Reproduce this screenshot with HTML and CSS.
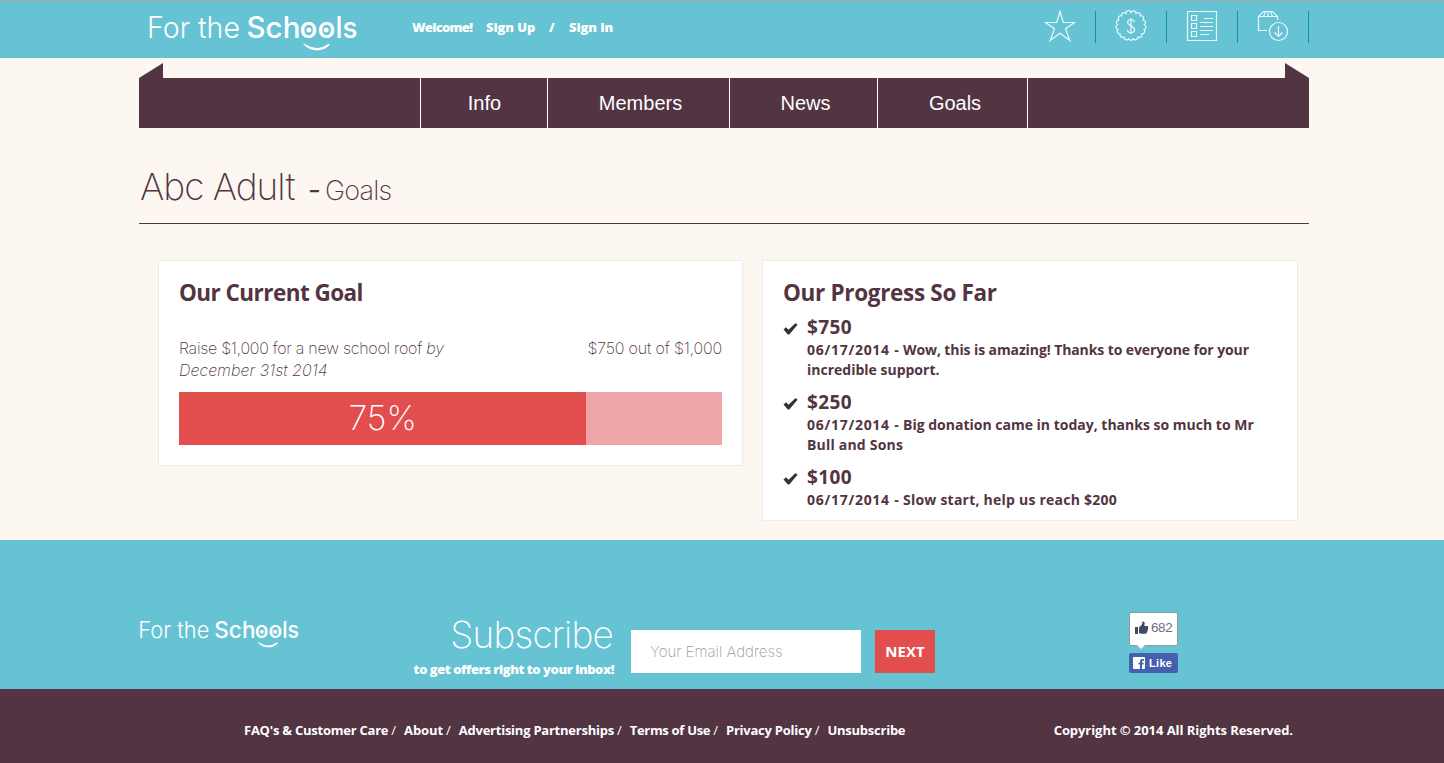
FILE: index.html
```html
<!DOCTYPE html>
<html lang="en">
<head>
<meta charset="utf-8">
<title>For the Schools - Goals</title>
<link rel="stylesheet" href="styles.css">
</head>
<body>
<header class="top">
  <div class="wrap top-row">
    <svg class="logo" viewBox="0 0 212 40">
      <text class="thin" x="-1" y="27" textLength="93" lengthAdjust="spacingAndGlyphs">For the</text>
      <text x="98.500" y="27" textLength="54" lengthAdjust="spacingAndGlyphs">Sch</text>
      <text x="151.500" y="27" textLength="36" lengthAdjust="spacingAndGlyphs">oo</text>
      <text x="187.500" y="27" textLength="22" lengthAdjust="spacingAndGlyphs">ls</text>
      <circle cx="160.800" cy="19" r="2.500"/><circle cx="178.200" cy="19" r="2.500"/>
      <path d="M156 32.500Q169 41 180 33Q182 32 181.300 34.300C175 41 163 41.500 155.700 33.500Q155 32.100 156 32.500z"/>
    </svg>
    <div class="account"><span class="welcome">Welcome!</span><a class="signup">Sign Up</a><span class="slash">/</span><a class="signin">Sign In</a></div>
    <div class="tools">
      <a class="tool"><svg viewBox="0 0 32 32"><path d="M16 1.500L19.300 12.500H30.500L21.500 18.700L25.800 30.500L16 23.300L6.200 30.500L10.500 18.700L1.500 12.500H12.700z"/></svg></a>
      <a class="tool"><svg viewBox="0 0 32 32"><path d="M16 2.500a2.600 2.600 0 0 1 5 .9a2.600 2.600 0 0 1 4.300 2.500a2.600 2.600 0 0 1 2.800 4.100a2.600 2.600 0 0 1 1.300 4.700a2.600 2.600 0 0 1-.4 4.900a2.600 2.600 0 0 1-2.300 4.300a2.600 2.600 0 0 1-3.700 3.200a2.600 2.600 0 0 1-4.700 1.700a2.600 2.600 0 0 1-4.700 0a2.600 2.600 0 0 1-4.700-1.700a2.600 2.600 0 0 1-3.700-3.200a2.600 2.600 0 0 1-2.300-4.300a2.600 2.600 0 0 1-.4-4.900a2.600 2.600 0 0 1 1.300-4.700a2.600 2.600 0 0 1 2.800-4.100a2.600 2.600 0 0 1 4.300-2.500a2.600 2.600 0 0 1 5.100-.9z"/><path d="M16 8v16M19.300 12.500c0-4-6.600-4-6.600 0c0 3.800 6.800 3 6.800 7c0 4.200-7 4.200-7 0"/></svg></a>
      <a class="tool"><svg viewBox="0 0 32 32"><path d="M1.500 1.500h29v29h-29zM5.500 5.500h5v5h-5zM5.500 13.500h5v5h-5zM5.500 21.500h5v5h-5zM18 8.500h9M14 12.500h13M14 16.500h13M14 20.500h13M14 24.500h9"/></svg></a>
      <a class="tool"><svg viewBox="0 0 32 32"><path d="M10 20.500H1.500V6.500L6.500 1.500H15.500L20.500 6.500V10M1.500 6.500H20.500M6.500 6.500L8.500 1.500M11 1.500V6.500M15.500 6.500L13.500 1.500M21.500 16v10M17.500 22.500L21.500 26.500L25.500 22.500"/><circle cx="21.500" cy="21.500" r="9"/></svg></a>
    </div>
  </div>
</header>

<main class="wrap">
  <div class="ribbon-ends"><i class="end-left"></i><i class="end-right"></i></div>
  <nav class="nav"><a class="n1">Info</a><a class="n2">Members</a><a class="n3">News</a><a class="n4">Goals</a></nav>
  <h1 class="title"><span class="group">Abc Adult</span><span class="dash">-</span><span class="page">Goals</span></h1>
  <div class="cards">
    <section class="card goal">
      <h2 class="h-goal">Our Current Goal</h2>
      <div class="goal-text">
        <p><span class="what">Raise $1,000 for a new school roof <em>by</em></span><br><em>December 31st 2014</em></p>
        <p class="amount">$750 out of $1,000</p>
      </div>
      <div class="bar"><div class="fill" style="width:75%">75%</div></div>
    </section>
    <section class="card progress">
      <h2 class="h-progress">Our Progress So Far</h2>
      <ul class="list">
        <li><svg class="tick" viewBox="0 0 15 12"><path d="M0.500 6.500L3 4.200L5.600 6.700L12 0.500Q13.800 0 14.500 1.800L6.300 11.500H4.800z"/></svg><div><h3>$750</h3><p><span class="date">06/17/2014 - </span><span class="l1">Wow, this is amazing! Thanks to everyone for your</span><br>incredible support.</p></div></li>
        <li><svg class="tick" viewBox="0 0 15 12"><path d="M0.500 6.500L3 4.200L5.600 6.700L12 0.500Q13.800 0 14.500 1.800L6.300 11.500H4.800z"/></svg><div><h3>$250</h3><p><span class="date">06/17/2014 - </span>Big donation came in today, thanks so much to Mr<br><span class="l4">Bull and Sons</span></p></div></li>
        <li><svg class="tick" viewBox="0 0 15 12"><path d="M0.500 6.500L3 4.200L5.600 6.700L12 0.500Q13.800 0 14.500 1.800L6.300 11.500H4.800z"/></svg><div><h3>$100</h3><p><span class="date">06/17/2014 - </span><span class="l5">Slow start, help us reach $200</span></p></div></li>
      </ul>
    </section>
  </div>
</main>

<section class="subscribe">
  <div class="wrap sub-row">
    <svg class="logo logo-small" viewBox="0 0 212 40">
      <text class="thin" x="-1" y="27" textLength="93" lengthAdjust="spacingAndGlyphs">For the</text>
      <text x="98.500" y="27" textLength="54" lengthAdjust="spacingAndGlyphs">Sch</text>
      <text x="151.500" y="27" textLength="36" lengthAdjust="spacingAndGlyphs">oo</text>
      <text x="187.500" y="27" textLength="22" lengthAdjust="spacingAndGlyphs">ls</text>
      <circle cx="160.800" cy="19" r="2.500"/><circle cx="178.200" cy="19" r="2.500"/>
      <path d="M156 32.500Q169 41 180 33Q182 32 181.300 34.300C175 41 163 41.500 155.700 33.500Q155 32.100 156 32.500z"/>
    </svg>
    <div class="sub-text"><div class="sub-title">Subscribe</div><div class="sub-note">to get offers right to your inbox!</div></div>
    <div class="email">Your Email Address</div>
    <div class="next">NEXT</div>
    <div class="like">
      <div class="count"><svg viewBox="0 0 14 14"><path d="M0 6h3v7H0zM4 6.500L7 3.500L7.500 0.500Q9.500 0 9.700 2.500L9.300 5H12.500Q13.600 5.500 13 7Q13.300 8 12.700 9Q12.700 10.200 12 11Q12 12.500 10.500 12.700H6L4 12z"/></svg><span>682</span></div>
      <div class="like-btn"><svg viewBox="0 0 12 12"><path d="M1 0H11a1 1 0 0 1 1 1V11a1 1 0 0 1-1 1H9V7.500H10.500L10.800 5.700H9V4.500Q9 3.700 10 3.700H11V2H9.500Q7 2 7 4.300V5.700H5.500V7.500H7V12H1a1 1 0 0 1-1-1V1a1 1 0 0 1 1-1z"/></svg><span>Like</span></div>
    </div>
  </div>
</section>

<footer class="foot">
  <div class="wrap foot-row">
    <a>FAQ's &amp; Customer Care</a><i>/</i><a class="about">About</a><i>/</i><a>Advertising Partnerships</a><i>/</i><a class="terms">Terms of Use</a><i>/</i><a>Privacy Policy</a><i>/</i><a>Unsubscribe</a>
    <span class="copy">Copyright © 2014 All Rights Reserved.</span>
  </div>
</footer>
</body>
</html>
```
FILE: styles.css
```css
* { box-sizing: border-box; }
body { margin: 0; background: #fdf7f1; color: #523442; font-family: "Open Sans", "Noto Sans", sans-serif; white-space: nowrap; }
h1, h2, h3, p, ul { margin: 0; padding: 0; }
.wrap { width: 1170px; margin-left: 139px; }

.top { height: 58px; background: #66c3d4; border-top: 2px solid #85b5bd; }
.top-row { display: flex; color: #fff; }
.logo { width: 212px; height: 40px; margin: 9px 0 0 9px; overflow: visible; fill: #fff; font: 500 29.500px Inter, "Liberation Sans", sans-serif; }
.logo .thin { font-weight: 300; }
.account { display: flex; margin: 15px 0 0 52px; font-weight: 800; font-size: 13px; line-height: 20px; }
.welcome { width: 74px; letter-spacing: -0.7px; }
.signup { width: 63px; letter-spacing: -0.1px; }
.slash { width: 20px; }
.signin { letter-spacing: -0.1px; }
.tools { display: flex; margin: 9px 0 0 auto; }
.tool { display: flex; justify-content: center; width: 71px; height: 32px; border-right: 1px solid #1692a3; }
.tool svg { width: 32px; height: 32px; margin-top: -1px; fill: none; stroke: #e6fbff; stroke-width: 1.2; }

.ribbon-ends { display: flex; justify-content: space-between; padding-top: 5px; }
.ribbon-ends i { width: 24px; height: 15px; background: #523442; }
.end-left { clip-path: polygon(100% 0, 100% 100%, 0 100%); }
.end-right { clip-path: polygon(0 0, 100% 100%, 0 100%); }
.nav { display: flex; height: 50px; padding-left: 281px; background: #523442; color: #fff; font: 20px/50px "Liberation Sans", Arial, sans-serif; text-align: center; }
.nav a { border-left: 1px solid #fff; }
.n1 { width: 127px; padding-left: 1px; }
.n2 { width: 182px; padding-left: 4px; }
.n3 { width: 148px; padding-left: 4px; }
.n4 { width: 151px; padding-left: 5px; border-right: 1px solid #fff; }

.title { display: flex; align-items: baseline; height: 96px; padding: 34px 0 0 1px; border-bottom: 1px solid #523442; font: 200 37px/50px Inter, sans-serif; }
.group { width: 168px; letter-spacing: -1px; }
.dash { width: 17px; font-size: 28px; font-weight: 400; line-height: 40px; }
.page { font-size: 27px; letter-spacing: -0.8px; }

.cards { display: flex; align-items: flex-start; gap: 19px; padding: 36px 0 0 19px; height: 316px; }
.card { background: #fff; border: 1px solid #f1ebe7; padding: 0 20px; }
.card h2 { font-size: 22.500px; line-height: 32px; margin-top: 16px; }
.h-goal { letter-spacing: -0.55px; }
.h-progress { letter-spacing: -0.32px; }
.goal { width: 585px; height: 206px; }
.goal-text { display: flex; justify-content: space-between; margin-top: 28px; font: 200 16px/22px Inter, sans-serif; }
.what { letter-spacing: -0.28px; }
.amount { letter-spacing: -0.17px; }
.bar { height: 53px; margin-top: 11px; background: #f0a6a8; }
.fill { height: 53px; background: #e24d4d; color: #fff; text-align: center; font: 200 34px/52px Inter, sans-serif; }
.progress { width: 536px; height: 261px; }
.list { list-style: none; margin-top: 6px; }
.list li { display: flex; gap: 9px; margin-bottom: 10px; }
.tick { width: 15px; height: 12px; margin-top: 8px; fill: #333; }
.list h3 { font-size: 19px; line-height: 24px; letter-spacing: 0.4px; }
.list p { font-size: 14px; font-weight: 700; line-height: 20px; padding-top: 1px; }
.date { display: inline-block; width: 96px; white-space: pre; letter-spacing: 0.72px; }
.l1 { letter-spacing: -0.1px; }
.l4 { letter-spacing: 0.2px; }
.l5 { letter-spacing: 0.23px; }

.subscribe { height: 149px; background: #66c3d4; color: #fff; }
.sub-row { display: flex; align-items: flex-start; }
.logo-small { width: 162px; height: 31px; margin: 77px 0 0; }
.sub-text { width: 176px; margin: 70px 0 0 137px; display: flex; flex-direction: column; align-items: flex-end; }
.sub-title { padding-right: 1px; font: 200 37px/50px Inter, sans-serif; letter-spacing: -0.8px; }
.sub-note { font-size: 13px; font-weight: 800; line-height: 18px; letter-spacing: -0.46px; }
.email { width: 230px; height: 43px; margin: 90px 0 0 17px; padding-left: 19px; background: #fff; color: #999; font: 200 15px/43px Inter, sans-serif; }
.next { width: 60px; height: 43px; margin: 90px 0 0 14px; background: #e24d4d; font-size: 15px; font-weight: 700; line-height: 43px; text-align: center; }
.like { width: 49px; margin: 72px 131px 0 auto; }
.count { position: relative; display: flex; align-items: center; gap: 2px; height: 34px; padding: 0 0 3px 5px; border: 1px solid #8a9ba3; border-radius: 2px; background: #fff; color: #6a7180; font: 13.500px "Liberation Sans", Arial, sans-serif; letter-spacing: -0.4px; }
.count::after { content: ""; position: absolute; left: 7px; bottom: -4px; width: 8px; height: 4px; background: #fff; clip-path: polygon(0 0, 100% 0, 50% 100%); }
.count svg { width: 14px; height: 14px; fill: #3e4a5e; }
.like-btn { display: flex; align-items: center; gap: 4px; height: 20px; margin-top: 7px; padding-left: 4px; border-radius: 2px; background: #4460ae; font: 700 11px "Liberation Sans", Arial, sans-serif; letter-spacing: 0.3px; }
.like-btn svg { width: 12px; height: 12px; fill: #fff; }

.foot { height: 74px; background: #523442; color: #fff; font-size: 13px; font-weight: 700; line-height: 20px; }
.foot-row { display: flex; padding: 31px 0 0 105px; letter-spacing: -0.24px; }
.foot i { width: 12.800px; margin-left: 3px; font-style: normal; font-weight: 400; }
.about { letter-spacing: -0.1px; }
.terms { letter-spacing: -0.3px; }
.copy { margin: 0 16px 0 auto; letter-spacing: -0.06px; }
```
